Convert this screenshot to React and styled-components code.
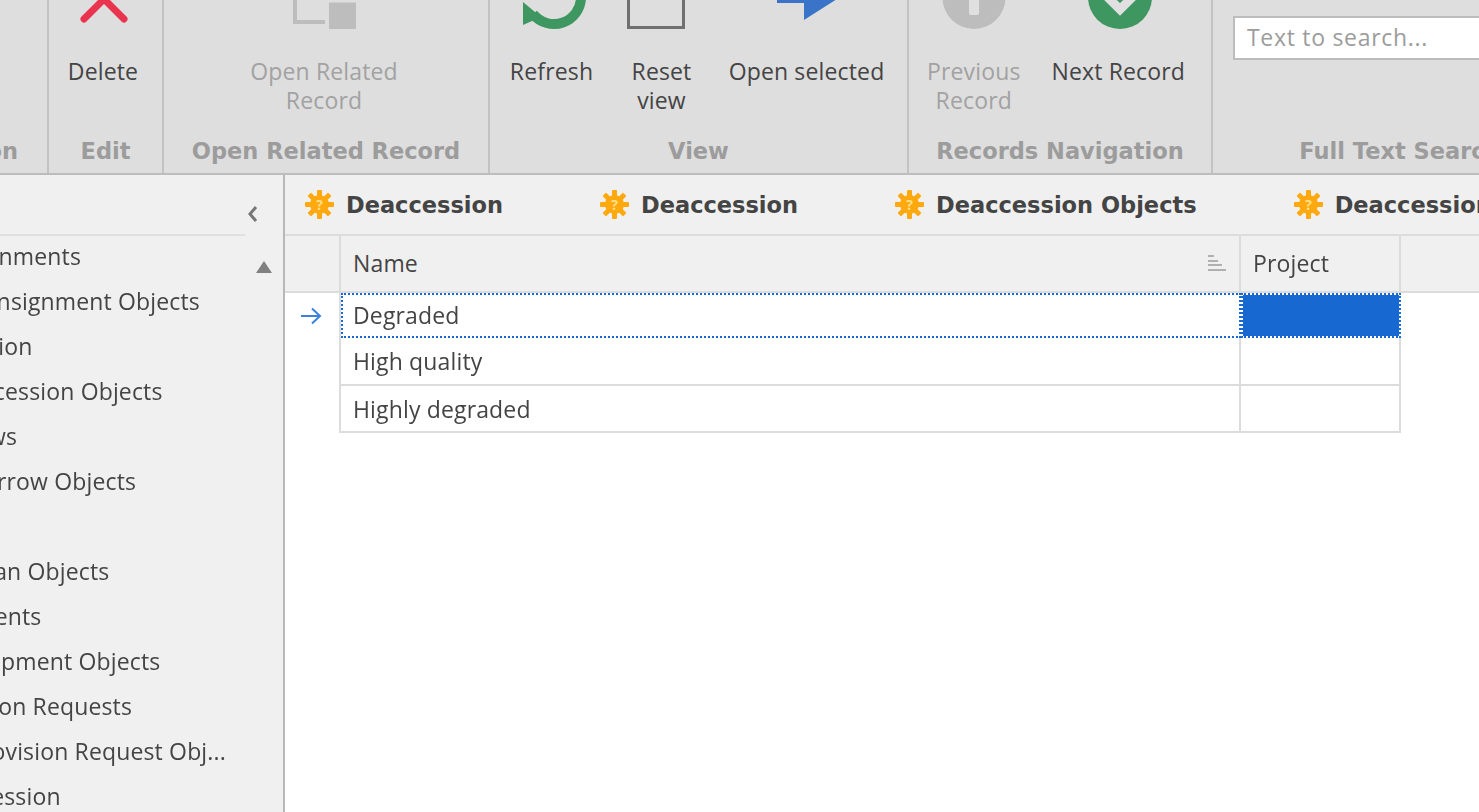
import styled, { createGlobalStyle } from 'styled-components';

const GlobalStyle = createGlobalStyle`
  html, body {
    margin: 0;
    height: 100%;
    overflow: hidden;
    background: #fff;
  }
  * { box-sizing: border-box; }
`;

const Page = styled.div`
  width: 1479px;
  height: 812px;
  overflow: hidden;
  display: flex;
  flex-direction: column;
  font-family: 'Open Sans', 'Noto Sans', sans-serif;
  font-size: 23px;
  letter-spacing: 0.15px;
  color: #444;
  filter: blur(0.5px);
`;

const BoldText = `
  font-family: 'DejaVu Sans', sans-serif;
  font-size: 22.5px;
  font-weight: 700;
  letter-spacing: 0;
`;

const Ribbon = styled.div`
  flex: 0 0 175px;
  display: flex;
  background: #dedede;
  border-bottom: 2px solid #bdbdbd;
`;
const Group = styled.div`
  flex: 0 0 ${props => props.$width}px;
  display: flex;
  flex-direction: column;
  border-right: 2px solid #c2c2c2;
  overflow: hidden;
`;
const GroupBody = styled.div`
  flex: 1;
  display: flex;
  justify-content: center;
  gap: ${props => props.$gap || 0}px;
  padding-right: ${props => props.$trim || 0}px;
`;
const SearchBody = styled.div`
  flex: 1;
  padding: 16px 0 0 20px;
`;
const GroupLabel = styled.div`
  ${BoldText}
  height: 38px;
  line-height: 33px;
  color: #9c9c9c;
  text-align: center;
  white-space: nowrap;
`;
const ClippedLabel = styled(GroupLabel)`
  display: flex;
  justify-content: flex-end;
  padding-right: 29px;
`;
const ToolButton = styled.div`
  display: flex;
  flex-direction: column;
  align-items: center;
  flex: 0 0 ${props => (props.$width ? `${props.$width}px` : 'auto')};
`;
const IconBox = styled.div`
  height: 30px;
  overflow: hidden;
  display: flex;
  justify-content: center;
  align-items: flex-end;
  margin-bottom: 26.5px;
  transform: translateX(${props => props.$shift || 0}px);
`;
const ToolText = styled.div`
  line-height: 29.5px;
  text-align: center;
  white-space: nowrap;
  color: ${props => (props.$disabled ? '#a2a2a2' : '#444')};
`;
const SearchInput = styled.input`
  display: block;
  width: 340px;
  height: 44px;
  padding: 0 12px 2px;
  border: 2px solid #bcbcbc;
  background: #fff;
  font: inherit;
  letter-spacing: 0.7px;
  outline: none;
  &::placeholder { color: #9c9c9c; opacity: 1; }
`;

const Content = styled.div`
  flex: 1;
  display: flex;
  min-height: 0;
`;
const Sidebar = styled.div`
  flex: 0 0 285px;
  display: flex;
  flex-direction: column;
  background: #f0f0f0;
  border-right: 2px solid #b8b8b8;
  overflow: hidden;
`;
const SideHead = styled.div`
  flex: 0 0 61px;
  display: flex;
`;
const SideTitle = styled.div`
  flex: 0 0 245px;
  border-bottom: 2px solid #e0e0e0;
`;
const Collapse = styled.div`
  padding: 22px 0 0 2px;
  height: 40px;
`;
const SideBody = styled.div`
  flex: 1;
  display: flex;
  min-height: 0;
`;
const NavList = styled.div`
  flex: 1;
  margin-left: -74px;
  margin-top: -2px;
`;
const NavItem = styled.div`
  height: 45px;
  line-height: 45px;
  white-space: nowrap;
  padding-left: ${props => (props.$child ? 42 : 0)}px;
`;
const ScrollColumn = styled.div`
  flex: 0 0 27px;
  padding-top: 12px;
`;

const Main = styled.div`
  flex: 1;
  display: flex;
  flex-direction: column;
  min-width: 0;
`;
const TabStrip = styled.div`
  flex: 0 0 61px;
  display: flex;
  align-items: center;
  gap: 97px;
  padding: 0 0 0 20px;
  background: #f0f0f0;
  border-bottom: 2px solid #dcdcdc;
  overflow: hidden;
`;
const Tab = styled.div`
  ${BoldText}
  display: flex;
  align-items: center;
  gap: 12px;
  flex-shrink: 0;
  white-space: nowrap;
`;

const Row = styled.div`
  display: grid;
  grid-template-columns: 56px 900px 160px;
  height: ${props => props.$height}px;
`;
const HeaderRow = styled(Row)`
  background: #f0f0f0;
  border-bottom: 2px solid #dcdcdc;
  flex-shrink: 0;
`;
const HeadCell = styled.div`
  display: flex;
  align-items: center;
  justify-content: space-between;
  padding: 0 13px 2px 12px;
  border-right: 2px solid #dcdcdc;
  &:first-child { padding: 0; }
`;
const Indicator = styled.div`
  display: flex;
  align-items: center;
  padding-left: 15px;
  border-right: 2px solid #dcdcdc;
`;
const Cell = styled.div`
  display: flex;
  align-items: center;
  padding: 0 12px;
  white-space: nowrap;
  border-right: 2px solid #dcdcdc;
  border-bottom: 2px solid #dcdcdc;
`;
const FocusCell = styled(Cell)`
  padding: 0 10px 2px;
  border: 2px dotted #1a69d1;
  background: ${props => (props.$filled ? '#1868d2' : '#fff')};
  background-clip: padding-box;
`;

function BoxIcon({ width, children }) {
  return (
    <svg width={width} height="70" viewBox={`0 -40 ${width} 70`} style={{ flexShrink: 0 }}>
      {children}
    </svg>
  );
}

const icons = {
  delete: (
    <BoxIcon width={50}>
      <path d="M5 19 L25 -1 L45 19" fill="none" stroke="#e8344e" strokeWidth="7" strokeLinecap="round" />
    </BoxIcon>
  ),
  related: (
    <BoxIcon width={64}>
      <path d="M2 -5 V22 H32" fill="none" stroke="#bdbdbd" strokeWidth="4" />
      <rect x="36" y="2.5" width="27" height="26.5" fill="#bdbdbd" />
    </BoxIcon>
  ),
  refresh: (
    <BoxIcon width={66}>
      <path d="M60 -3 A27 27 0 0 1 12 14" fill="none" stroke="#3e9660" strokeWidth="10" />
      <path d="M2 2 L2 25 L20 17 Z" fill="#3e9660" />
    </BoxIcon>
  ),
  reset: (
    <BoxIcon width={60}>
      <path d="M2.5 -20 V27.5 H57.5 V-20" fill="none" stroke="#707070" strokeWidth="3" />
    </BoxIcon>
  ),
  open: (
    <BoxIcon width={62}>
      <path d="M1 -20 H28 V-36 L72 -8 L28 20 V3 H1 Z" fill="#3a74c8" />
    </BoxIcon>
  ),
  previous: (
    <BoxIcon width={64}>
      <circle cx="32" cy="-2.5" r="31.5" fill="#bdbdbd" />
      <rect x="27" y="-10" width="10" height="25" rx="2" fill="#e0e0e0" />
    </BoxIcon>
  ),
  next: (
    <BoxIcon width={64}>
      <circle cx="32" cy="-3" r="32" fill="#3e9660" />
      <path d="M12 -10.5 L32 9.5 L52 -10.5" fill="none" stroke="#e0e0e0" strokeWidth="9" />
    </BoxIcon>
  ),
};

function Gear() {
  const teeth = [0, 45, 90, 135];
  return (
    <svg width="29" height="29" viewBox="0 0 29 29" style={{ flexShrink: 0 }}>
      {teeth.map(angle => (
        <rect key={angle} x="12" y="0" width="5" height="29" rx="1" fill="#ffa90f" transform={`rotate(${angle} 14.5 14.5)`} />
      ))}
      <circle cx="14.5" cy="14.5" r="9.5" fill="#ffa90f" />
      <text x="14.5" y="19.5" textAnchor="middle" fontSize="14" fontWeight="700" fontFamily="'Open Sans', sans-serif" fill="#ffe08a">?</text>
    </svg>
  );
}

function Tool({ icon, disabled, width, shift, children }) {
  return (
    <ToolButton $width={width}>
      <IconBox $shift={shift}>{icons[icon]}</IconBox>
      <ToolText $disabled={disabled}>{children}</ToolText>
    </ToolButton>
  );
}

const navItems = [
  ['Consignments'],
  ['Consignment Objects', true],
  ['Accession'],
  ['Accession Objects', true],
  ['Borrows'],
  ['Borrow Objects', true],
  ['Loans'],
  ['Loan Objects', true],
  ['Shipments'],
  ['Shipment Objects', true],
  ['Provision Requests'],
  ['Provision Request Obj...', true],
  ['Deaccession'],
];

const tabs = ['Deaccession', 'Deaccession', 'Deaccession Objects', 'Deaccession'];

export default function App() {
  return (
    <Page>
      <GlobalStyle />
      <Ribbon>
        <Group $width={49}>
          <GroupBody />
          <ClippedLabel>Action</ClippedLabel>
        </Group>
        <Group $width={115}>
          <GroupBody $trim={5}>
            <Tool icon="delete" shift={1}>Delete</Tool>
          </GroupBody>
          <GroupLabel>Edit</GroupLabel>
        </Group>
        <Group $width={326}>
          <GroupBody $trim={4}>
            <Tool icon="related" disabled shift={1}>Open Related<br />Record</Tool>
          </GroupBody>
          <GroupLabel>Open Related Record</GroupLabel>
        </Group>
        <Group $width={419}>
          <GroupBody $gap={35} $trim={4}>
            <Tool icon="refresh" width={86} shift={2}>Refresh</Tool>
            <Tool icon="reset" width={64} shift={-6}>Reset<br />view</Tool>
            <Tool icon="open" width={156}>Open selected</Tool>
          </GroupBody>
          <GroupLabel>View</GroupLabel>
        </Group>
        <Group $width={304}>
          <GroupBody $gap={31} $trim={8}>
            <Tool icon="previous" disabled>Previous<br />Record</Tool>
            <Tool icon="next" shift={2}>Next Record</Tool>
          </GroupBody>
          <GroupLabel>Records Navigation</GroupLabel>
        </Group>
        <Group $width={376}>
          <SearchBody>
            <SearchInput placeholder="Text to search..." readOnly />
          </SearchBody>
          <GroupLabel>Full Text Search</GroupLabel>
        </Group>
      </Ribbon>
      <Content>
        <Sidebar>
          <SideHead>
            <SideTitle />
            <Collapse>
              <svg width="12" height="16" viewBox="0 0 12 16">
                <path d="M9 1 L3 8 L9 15" fill="none" stroke="#777" strokeWidth="3" />
              </svg>
            </Collapse>
          </SideHead>
          <SideBody>
            <NavList>
              {navItems.map(([label, child]) => (
                <NavItem key={label} $child={child}>{label}</NavItem>
              ))}
            </NavList>
            <ScrollColumn>
              <svg width="16" height="12" viewBox="0 0 16 12">
                <path d="M0 12 L8 0 L16 12 Z" fill="#808080" />
              </svg>
            </ScrollColumn>
          </SideBody>
        </Sidebar>
        <Main>
          <TabStrip>
            {tabs.map((label, index) => (
              <Tab key={index}>
                <Gear />
                {label}
              </Tab>
            ))}
          </TabStrip>
          <HeaderRow $height={57}>
            <HeadCell />
            <HeadCell>
              Name
              <svg width="18" height="16" viewBox="0 0 18 16">
                <path d="M0 1 H6 M0 6 H10 M0 10 H14 M0 15 H18" stroke="#b0b0b0" strokeWidth="2" />
              </svg>
            </HeadCell>
            <HeadCell>Project</HeadCell>
          </HeaderRow>
          <Row $height={45}>
            <Indicator>
              <svg width="22" height="18" viewBox="0 0 22 18">
                <path d="M1 9 H20 M12 1.5 L20 9 L12 16.5" fill="none" stroke="#3a82dc" strokeWidth="2" />
              </svg>
            </Indicator>
            <FocusCell>Degraded</FocusCell>
            <FocusCell $filled />
          </Row>
          <Row $height={48}>
            <Indicator />
            <Cell>High quality</Cell>
            <Cell />
          </Row>
          <Row $height={47}>
            <Indicator />
            <Cell>Highly degraded</Cell>
            <Cell />
          </Row>
        </Main>
      </Content>
    </Page>
  );
}
